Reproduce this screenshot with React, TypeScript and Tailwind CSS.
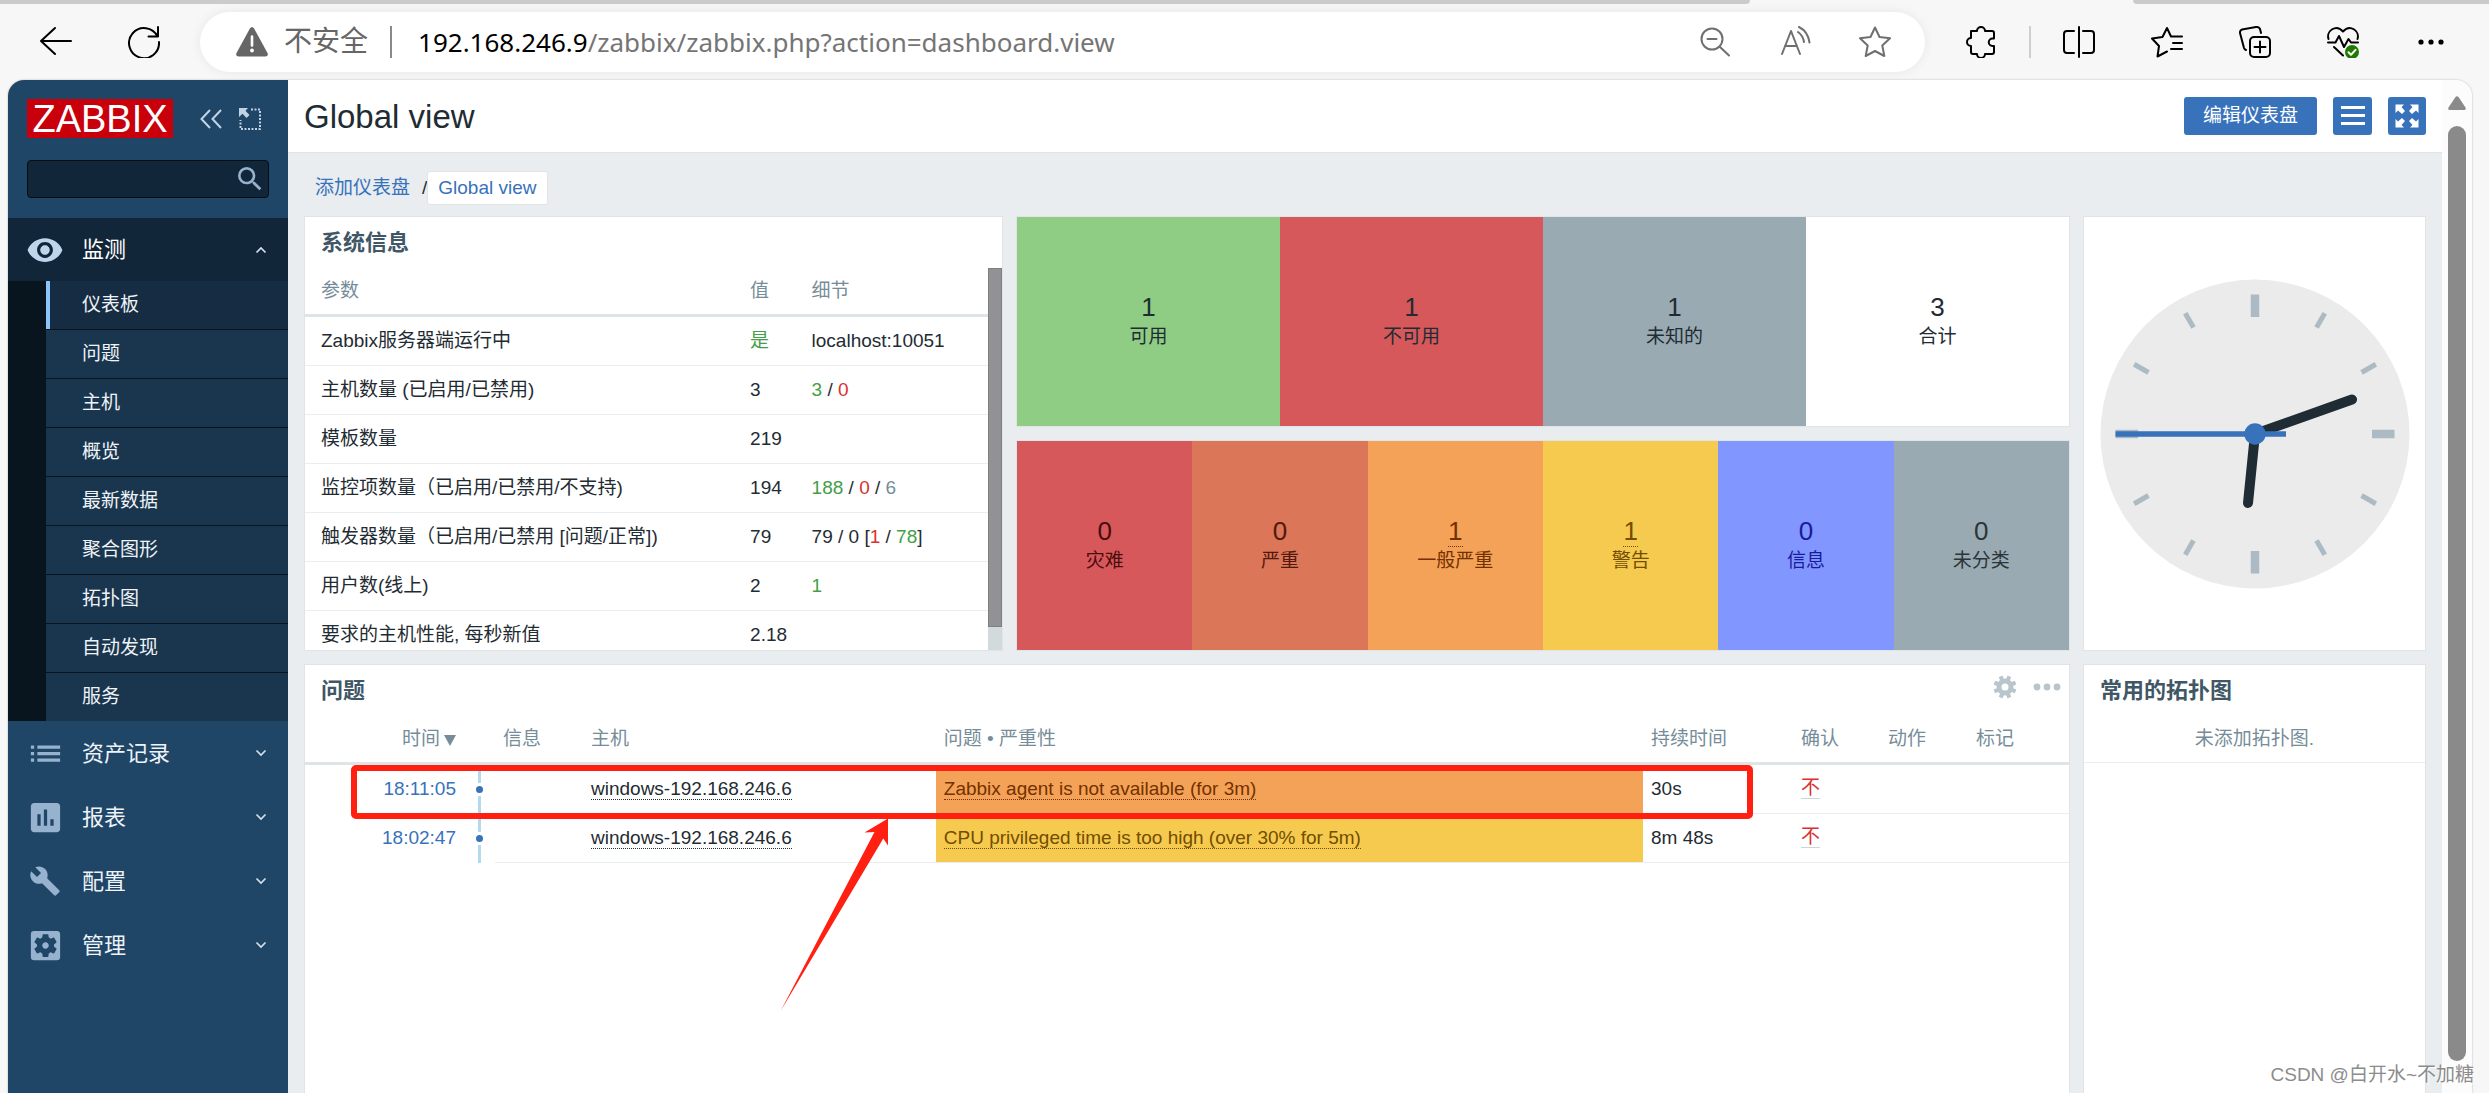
import React from "react";
import {
  MdBuild,
  MdInsertChart,
  MdList,
  MdSearch,
  MdSettingsApplications,
  MdVisibility,
} from "react-icons/md";

type IconProps = { children: React.ReactNode; className?: string; label?: string };

function ToolIcon({ children, label, className = "text-black" }: IconProps) {
  return (
    <button type="button" aria-label={label} className={`h-8 w-8 shrink-0 ${className}`}>
      <svg
        viewBox="0 0 32 32"
        className="h-8 w-8"
        fill="none"
        stroke="currentColor"
        strokeWidth="2"
        strokeLinecap="round"
        strokeLinejoin="round"
      >
        {children}
      </svg>
    </button>
  );
}

function TabStrip() {
  return (
    <div className="flex h-1 shrink-0 justify-between bg-[#f7f7f7]">
      <div className="w-[70.3%] rounded-br-lg bg-[#cbcbcb]" />
      <div className="w-[14.3%] rounded-bl-lg bg-[#cbcbcb]" />
    </div>
  );
}

function BrowserBar() {
  return (
    <div className="flex h-[76px] shrink-0 items-center bg-[#f7f7f7] pr-[42px] pl-10">
      <ToolIcon label="返回">
        <path d="M31 15H1M15 2 1 15l14 13" />
      </ToolIcon>
      <div className="w-14 shrink-0" />
      <ToolIcon label="刷新">
        <path d="M29.500 10.500A15 15 0 1 0 31 16M30 1v9.500H20.500" />
      </ToolIcon>
      <div className="ml-10 flex h-[60px] min-w-0 flex-1 items-center rounded-full bg-white pr-[34px] pl-9 shadow-[0_0_12px_rgba(0,0,0,0.07)]">
        <svg viewBox="0 0 32 32" className="h-8 w-8 shrink-0">
          <path
            d="M13.900 2.500q2.100-3 4.200 0L31.500 27q1.200 3.500-2.200 3.500H2.700Q-.7 30.500.5 27Z"
            fill="#666"
          />
          <path d="M16 10.500v9" stroke="#fff" strokeWidth="2.600" strokeLinecap="round" />
          <circle cx="16" cy="24.500" r="1.900" fill="#fff" />
        </svg>
        <span className="ml-4 text-[28px] leading-none whitespace-nowrap text-[#666]">不安全</span>
        <span className="ml-[22px] h-8 w-0.5 bg-[#8a8a8a]" />
        <div className="ml-[26px] min-w-0 flex-1 truncate font-['Noto_Sans','Noto_Sans_CJK_SC',sans-serif] text-[26px] leading-9 text-[#757575]">
          <span className="text-black">192.168.246.9</span>/zabbix/zabbix.php?action=dashboard.view
        </div>
        <div className="flex gap-12">
          <ToolIcon label="缩小" className="text-[#6f6f6f]">
            <circle cx="13" cy="13" r="10.500" />
            <path d="M8.500 13h9M21 21l9 8.500" />
          </ToolIcon>
          <ToolIcon label="大声朗读" className="text-[#6f6f6f]">
            <path d="M3 28 12 5l9 23M6 20h12M19 6q5 3.500 6 10M20 1q9 4.500 10.500 15.500" />
          </ToolIcon>
          <ToolIcon label="收藏" className="text-[#6f6f6f]">
            <path d="m16 1.500 4.500 9.500 10.500 1.300-7.700 7.200 2 10.500L16 25l-9.300 5 2-10.500L1 12.300 11.500 11Z" />
          </ToolIcon>
        </div>
      </div>
      <div className="w-10 shrink-0" />
      <ToolIcon label="扩展">
        <path d="M6 5h6a4 4 0 0 1 8 0h7a2 2 0 0 1 2 2v5.500h-1.500a3.700 3.700 0 0 0 0 7.500H29v6a2 2 0 0 1-2 2h-7a4 4 0 0 1-8 0H8a2 2 0 0 1-2-2v-6a4 4 0 0 1 0-8Z" />
      </ToolIcon>
      <span className="mx-8 h-8 w-0.5 shrink-0 bg-[#cfcfcf]" />
      <div className="flex gap-14">
        <ToolIcon label="分屏">
          <path d="M11 5H4a3 3 0 0 0-3 3v16a3 3 0 0 0 3 3h7M20 5h8a3 3 0 0 1 3 3v16a3 3 0 0 1-3 3h-8M16 1v30" />
        </ToolIcon>
        <ToolIcon label="收藏夹">
          <path d="M20 10.500 16 2l-4.500 9L1 12.500l7 7.500-1.500 10.500L16 25.500M20 10.500h11M22 17h9M20 23h11" />
        </ToolIcon>
        <ToolIcon label="集锦">
          <rect x="11" y="11" width="20" height="20" rx="4" />
          <path d="M21 15.500v11M15.500 21h11M7 24q-1.500-.5-2-2L1 7Q.7 4.300 3 3.500L17 1q3-.300 4 2l1 4" />
        </ToolIcon>
        <ToolIcon label="浏览器概要">
          <path d="M1.500 13C-1 5 9-2.500 16 5.500 23-2.500 33 5 30.500 13M1 16.500h7.500L12 10l5 11 4.500-8 2.500 3.500h7M7 21l9 8.500" />
          <circle cx="25" cy="26" r="7" fill="#1e7a00" stroke="none" />
          <path d="m21.500 26.300 2.500 2.500 4.500-5" stroke="#fff" />
        </ToolIcon>
        <ToolIcon label="设置及其他">
          <g fill="currentColor" stroke="none">
            <circle cx="6" cy="16" r="2.600" />
            <circle cx="16" cy="16" r="2.600" />
            <circle cx="26" cy="16" r="2.600" />
          </g>
        </ToolIcon>
      </div>
    </div>
  );
}

function Chevron({ up = false }: { up?: boolean }) {
  return (
    <svg viewBox="0 0 12 8" className="ml-auto h-2 w-3" fill="none" stroke="#d5e0ea" strokeWidth="1.700">
      <path d={up ? "M1.500 6.500 6 2l4.500 4.500" : "M1.500 1.500 6 6l4.500-4.500"} />
    </svg>
  );
}

const SUBMENU = ["仪表板", "问题", "主机", "概览", "最新数据", "聚合图形", "拓扑图", "自动发现", "服务"];

const SECTIONS = [
  { label: "资产记录", icon: <MdList size={39} /> },
  { label: "报表", icon: <MdInsertChart size={39} /> },
  { label: "配置", icon: <MdBuild size={32} /> },
  { label: "管理", icon: <MdSettingsApplications size={39} /> },
];

function Sidebar() {
  return (
    <aside className="flex w-[280px] shrink-0 flex-col bg-[#1f4567]">
      <div className="flex items-center pt-[19px] pr-[27px] pl-[19px]">
        <a
          href="#home"
          className="flex h-[39px] w-[146px] items-center justify-center bg-[#c9000b] text-[38px] leading-none text-white"
        >
          ZABBIX
        </a>
        <button type="button" aria-label="收起侧栏" className="ml-[27px]">
          <svg viewBox="0 0 22 20" className="h-5 w-[22px]" fill="none" stroke="#c3d3e3" strokeWidth="2">
            <path d="M10 1 1.500 10l8.500 9M21 1l-8.500 9 8.500 9" />
          </svg>
        </button>
        <button type="button" aria-label="隐藏侧栏" className="ml-auto">
          <svg viewBox="0 0 22 22" className="h-[22px] w-[22px]">
            <path d="M0 0h9L6.500 2.800l4 4.200-3 3-4-4.200L0 9Z" fill="#c3d3e3" />
            <path
              d="M12 1.500h9V21H1.500v-9"
              fill="none"
              stroke="#c3d3e3"
              strokeWidth="2"
              strokeDasharray="2 1.500"
            />
          </svg>
        </button>
      </div>
      <div className="mx-[19px] mt-[22px] flex h-[38px] items-center rounded border border-[#050d14] bg-[#122639]">
        <input
          type="text"
          aria-label="搜索"
          className="h-full min-w-0 flex-1 bg-transparent px-2 text-[19px] text-white outline-none"
        />
        <button type="button" aria-label="搜索" className="mr-0.5 text-[#97b2cf]">
          <MdSearch size={32} />
        </button>
      </div>
      <nav className="mt-5">
        <button type="button" className="flex h-[63px] w-full items-center bg-[#122639] pr-[21px] text-[22px] text-white">
          <span className="flex w-[74px] justify-center text-[#bfd5ec]">
            <MdVisibility size={38} />
          </span>
          监测
          <Chevron up />
        </button>
        <ul className="bg-[#08151e] pl-[38px]">
          {SUBMENU.map((item, i) => (
            <li
              key={item}
              className={`border-[#08151e] ${i === 0 ? "bg-[#162c42]" : "bg-[#1a364f]"} ${
                i < SUBMENU.length - 1 ? "border-b" : ""
              }`}
            >
              <a
                href={`#menu-${i}`}
                className={`flex h-12 items-center border-l-4 pl-8 text-[19px] text-[#eef3f7] ${
                  i === 0 ? "border-[#8ac4fb]" : "border-transparent"
                }`}
              >
                {item}
              </a>
            </li>
          ))}
        </ul>
        {SECTIONS.map((s) => (
          <button
            type="button"
            key={s.label}
            className="flex h-16 w-full items-center pr-[21px] text-[22px] text-[#eef3f7]"
          >
            <span className="flex w-[74px] justify-center text-[#97b2cf]">{s.icon}</span>
            {s.label}
            <Chevron />
          </button>
        ))}
      </nav>
    </aside>
  );
}

function PageHeader() {
  return (
    <header className="flex h-[73px] shrink-0 items-center border-b border-[#dfe4e7] bg-white px-4">
      <h1 className="text-[33px] leading-none text-[#1f2c33]">Global view</h1>
      <div className="ml-auto flex gap-4 pb-px">
        <button type="button" className="h-[38px] rounded-[3px] bg-[#3772bb] px-[19px] text-[19px] leading-none text-white">
          编辑仪表盘
        </button>
        <button
          type="button"
          aria-label="操作"
          className="flex h-[38px] w-[39px] items-center justify-center rounded-[3px] bg-[#3772bb]"
        >
          <svg viewBox="0 0 24 20" className="h-5 w-6" fill="#fff">
            <path d="M0 0h24v3H0zM0 8h24v3H0zM0 16h24v3H0z" />
          </svg>
        </button>
        <button
          type="button"
          aria-label="全屏"
          className="flex h-[38px] w-[38px] items-center justify-center rounded-[3px] bg-[#3772bb]"
        >
          <svg viewBox="0 0 24 24" className="h-6 w-6" fill="#fff">
            {[0, 90, 180, 270].map((a) => (
              <path key={a} transform={`rotate(${a} 12 12)`} d="M.5.5h8.500L6.500 3 10 7 7 10 3 6.500.5 9Z" />
            ))}
          </svg>
        </button>
      </div>
    </header>
  );
}

function Widget({ className = "", children }: { className?: string; children: React.ReactNode }) {
  return (
    <section className={`min-w-0 overflow-hidden border border-[#dfe4e7] bg-white ${className}`}>{children}</section>
  );
}

function WidgetTitle({ title, children }: { title: string; children?: React.ReactNode }) {
  return (
    <div className="flex h-[51px] items-center pl-4">
      <h2 className="text-[22px] leading-none font-bold text-[#3f5766]">{title}</h2>
      {children}
    </div>
  );
}

const G = ({ children }: { children: React.ReactNode }) => <span className="text-[#429e47]">{children}</span>;
const R = ({ children }: { children: React.ReactNode }) => <span className="text-[#dc3030]">{children}</span>;

const INFO_ROWS: { name: string; value: React.ReactNode; detail?: React.ReactNode }[] = [
  { name: "Zabbix服务器端运行中", value: <G>是</G>, detail: "localhost:10051" },
  { name: "主机数量 (已启用/已禁用)", value: "3", detail: <><G>3</G> / <R>0</R></> },
  { name: "模板数量", value: "219" },
  {
    name: "监控项数量（已启用/已禁用/不支持)",
    value: "194",
    detail: <><G>188</G> / <R>0</R> / <span className="text-[#768d99]">6</span></>,
  },
  {
    name: "触发器数量（已启用/已禁用 [问题/正常])",
    value: "79",
    detail: <>79 / 0 [<R>1</R> / <G>78</G>]</>,
  },
  { name: "用户数(线上)", value: "2", detail: <G>1</G> },
  { name: "要求的主机性能, 每秒新值", value: "2.18" },
];

function SystemInfo() {
  return (
    <Widget className="row-span-2 flex flex-col">
      <WidgetTitle title="系统信息" />
      <div className="flex min-h-0 flex-1 overflow-hidden">
        <table className="w-full flex-1 table-fixed border-separate border-spacing-0 self-start text-left leading-6">
          <thead>
            <tr className="h-[49px] text-[#768d99]">
              <th className="w-[64%] border-b-[3px] border-[#dfe4e7] pl-4 font-normal">参数</th>
              <th className="w-[9%] border-b-[3px] border-[#dfe4e7] pl-2 font-normal">值</th>
              <th className="border-b-[3px] border-[#dfe4e7] pl-2 font-normal">细节</th>
            </tr>
          </thead>
          <tbody>
            {INFO_ROWS.map((r) => (
              <tr key={r.name} className="h-[49px] whitespace-nowrap">
                <td className="border-b border-[#ebeef0] pl-4">{r.name}</td>
                <td className="border-b border-[#ebeef0] pl-2">{r.value}</td>
                <td className="border-b border-[#ebeef0] pl-2">{r.detail}</td>
              </tr>
            ))}
          </tbody>
        </table>
        <div className="w-3.5 shrink-0 bg-[#d2dadd]">
          <div className="h-[94%] border border-[#7f7f80] bg-[#929294]" />
        </div>
      </div>
    </Widget>
  );
}

type Cell = { count: number; label: string; tone: string; link?: boolean };

const HOSTS: Cell[] = [
  { count: 1, label: "可用", tone: "bg-[#8fcd84] text-[#1f2c33]" },
  { count: 1, label: "不可用", tone: "bg-[#d6585b] text-[#1f2c33]" },
  { count: 1, label: "未知的", tone: "bg-[#9aaab2] text-[#1f2c33]" },
  { count: 3, label: "合计", tone: "bg-white text-[#1f2c33]" },
];

const SEVERITIES: Cell[] = [
  { count: 0, label: "灾难", tone: "bg-[#d6585b] text-[#4b0c0c]" },
  { count: 0, label: "严重", tone: "bg-[#dc7659] text-[#52190b]" },
  { count: 1, label: "一般严重", tone: "bg-[#f4a257] text-[#733100]", link: true },
  { count: 1, label: "警告", tone: "bg-[#f5ca4f] text-[#734d00]", link: true },
  { count: 0, label: "信息", tone: "bg-[#8196ff] text-[#1a1a9c]" },
  { count: 0, label: "未分类", tone: "bg-[#9aaab2] text-[#2a353a]" },
];

function CountTiles({ cells }: { cells: Cell[] }) {
  return (
    <Widget className="flex">
      {cells.map((c) => (
        <div key={c.label} className={`flex flex-1 flex-col items-center justify-center ${c.tone}`}>
          {c.link ? (
            <a href="#problems" className="h-[30px] border-b border-dotted border-current text-[26px] leading-7">
              {c.count}
            </a>
          ) : (
            <span className="h-[30px] text-[26px] leading-7">{c.count}</span>
          )}
          <span className="leading-7">{c.label}</span>
        </div>
      ))}
    </Widget>
  );
}

function Clock() {
  return (
    <Widget className="row-span-2 flex items-center justify-center">
      <svg viewBox="-155 -155 310 310" className="w-[310px]">
        <circle r="154.500" fill="#ebebeb" />
        <g stroke="#acbbc3">
          {Array.from({ length: 12 }, (_, i) => (
            <line
              key={i}
              y1={-139.5}
              y2={i % 3 === 0 ? -117 : -123}
              strokeWidth={i % 3 === 0 ? 8.5 : 5}
              transform={`rotate(${i * 30})`}
            />
          ))}
        </g>
        <g stroke="#1f2c33" strokeLinecap="round" strokeWidth="10">
          <line x2="-7" y2="69" />
          <line x2="97" y2="-34.500" />
        </g>
        <line x1="-139.500" x2="31" stroke="#3772bb" strokeWidth="5.500" />
        <circle r="10.700" fill="#3772bb" />
      </svg>
    </Widget>
  );
}

const PROBLEMS = [
  {
    time: "18:11:05",
    host: "windows-192.168.246.6",
    name: "Zabbix agent is not available (for 3m)",
    tone: "bg-[#f4a257] text-[#733100]",
    duration: "30s",
  },
  {
    time: "18:02:47",
    host: "windows-192.168.246.6",
    name: "CPU privileged time is too high (over 30% for 5m)",
    tone: "bg-[#f5ca4f] text-[#734d00]",
    duration: "8m 48s",
  },
];

const HEAD = "border-b-[3px] border-[#dfe4e7] pb-px font-normal";
const CELL = "border-b border-[#ebeef0] px-2 pb-0.5";

function Problems() {
  return (
    <Widget className="relative col-span-2 border-b-0">
      <WidgetTitle title="问题">
        <button type="button" aria-label="编辑" className="mb-2 ml-auto">
          <svg viewBox="-12 -12 24 24" className="h-6 w-6" stroke="#b9c5cc" fill="none">
            <circle r="6" strokeWidth="5" />
            {[22.5, 67.5, 112.5, 157.5].map((a) => (
              <path key={a} transform={`rotate(${a})`} strokeWidth="4" d="M0-11.500v4M0 7.500v4" />
            ))}
          </svg>
        </button>
        <button type="button" aria-label="更多" className="mr-2 mb-2 ml-4">
          <svg viewBox="0 0 28 8" className="h-2 w-7" fill="#b9c5cc">
            <circle cx="4" cy="4" r="3.400" />
            <circle cx="14" cy="4" r="3.400" />
            <circle cx="24" cy="4" r="3.400" />
          </svg>
        </button>
      </WidgetTitle>
      <table className="w-full table-fixed border-separate border-spacing-0 text-left leading-[21px]">
        <thead>
          <tr className="h-[49px] text-[#768d99]">
            <th className={`w-[159px] pr-2 text-right ${HEAD}`}>
              <a href="#sort" className="inline-flex items-center gap-1">
                时间
                <svg viewBox="0 0 12 11" className="mt-1 h-[11px] w-3" fill="#768d99">
                  <path d="M0 0h12L6 11Z" />
                </svg>
              </a>
            </th>
            <th className={`w-[31px] ${HEAD}`} />
            <th className={`w-[88px] px-2 ${HEAD}`}>信息</th>
            <th className={`w-[20%] px-2 ${HEAD}`}>主机</th>
            <th className={`px-2 ${HEAD}`}>问题 • 严重性</th>
            <th className={`w-[150px] px-2 ${HEAD}`}>持续时间</th>
            <th className={`w-[87px] px-2 ${HEAD}`}>确认</th>
            <th className={`w-[88px] px-2 ${HEAD}`}>动作</th>
            <th className={`w-[101px] px-2 ${HEAD}`}>标记</th>
          </tr>
        </thead>
        <tbody>
          {PROBLEMS.map((p) => (
            <tr key={p.time} className="h-[49px]">
              <td className="pr-2 pb-[3px] text-right">
                <a href="#event" className="text-[#3772bb]">
                  {p.time}
                </a>
              </td>
              <td className="p-0">
                <div className="flex h-[49px] flex-col items-center gap-[3px]">
                  <span className="w-[3px] flex-1 bg-[#b3d9f0]" />
                  <span className="h-[7px] w-[7px] rounded-full bg-[#3772bb]" />
                  <span className="w-[3px] flex-1 bg-[#b3d9f0]" />
                </div>
              </td>
              <td className={CELL} />
              <td className={CELL}>
                <a href="#host" className="border-b border-dotted border-current">
                  {p.host}
                </a>
              </td>
              <td className={`${CELL} ${p.tone}`}>
                <a href="#problem" className="border-b border-dotted border-current">
                  {p.name}
                </a>
              </td>
              <td className={CELL}>{p.duration}</td>
              <td className={CELL}>
                <a href="#ack" className="inline-block border-b border-[#ccd4dc] text-[#dc3030]">
                  不
                </a>
              </td>
              <td className={CELL} />
              <td className={CELL} />
            </tr>
          ))}
        </tbody>
      </table>
      <div className="pointer-events-none absolute top-[100px] right-[316px] left-[46px] h-[54px] rounded-[5px] border-[6px] border-[#ff2012]" />
      <svg
        viewBox="0 0 110 194"
        className="pointer-events-none absolute top-[153px] left-[475px] h-[194px] w-[110px]"
      >
        <path d="M108 .5 84.500 14.500l10-.5L.6 193 103.300 20.500 108 27.500Z" fill="#ff2012" />
      </svg>
    </Widget>
  );
}

function FavouriteMaps() {
  return (
    <Widget className="border-b-0">
      <WidgetTitle title="常用的拓扑图" />
      <p className="flex h-[47px] items-center justify-center border-b border-[#ebeef0] text-[#768d99]">
        未添加拓扑图.
      </p>
    </Widget>
  );
}

function PageScrollbar() {
  return (
    <div className="flex w-[30px] shrink-0 flex-col items-center bg-[#fcfcfc] pt-4 pb-8">
      <svg viewBox="0 0 18 14" className="h-3.5 w-[18px]" fill="#8a8a8a">
        <path d="M7.500 1q1.500-1.600 3 0l7 10.500q1 2.500-1.500 2.500H2Q-.5 14 .5 11.500Z" />
      </svg>
      <div className="mt-4 w-[18px] flex-1 rounded-full bg-[#8a8a8a]" />
    </div>
  );
}

export default function App() {
  return (
    <div className="relative flex h-screen flex-col overflow-hidden bg-[#f7f7f7] font-['Liberation_Sans','Noto_Sans_CJK_SC',sans-serif] text-[19px] text-[#1f2c33]">
      <TabStrip />
      <BrowserBar />
      <div className="mr-[17px] ml-2 flex min-h-0 flex-1 overflow-hidden rounded-t-2xl shadow-[0_0_2px_rgba(0,0,0,0.3)]">
        <Sidebar />
        <main className="flex min-w-0 flex-1 flex-col bg-[#e9edf0]">
          <PageHeader />
          <nav aria-label="面包屑" className="flex items-center pt-[18px] pb-[11px] pl-[27px]">
            <a href="#dashboards" className="text-[#3772bb]">
              添加仪表盘
            </a>
            <span className="ml-3">/</span>
            <a
              href="#global"
              className="flex h-[34px] items-center rounded-[3px] border border-[#dfe4e7] bg-white px-2.5 text-[#3772bb]"
            >
              Global view
            </a>
          </nav>
          <div className="grid min-h-0 flex-1 grid-cols-[699fr_1054fr_343fr] grid-rows-[211px_211px_minmax(0,1fr)] gap-[13px] px-4">
            <SystemInfo />
            <CountTiles cells={HOSTS} />
            <Clock />
            <CountTiles cells={SEVERITIES} />
            <Problems />
            <FavouriteMaps />
          </div>
        </main>
        <PageScrollbar />
      </div>
      <div className="pointer-events-none absolute right-[15px] bottom-1.5 text-[19px] leading-6 text-[#8c8c8c] [text-shadow:1px_1px_0_#fff]">
        CSDN @白开水~不加糖
      </div>
    </div>
  );
}
